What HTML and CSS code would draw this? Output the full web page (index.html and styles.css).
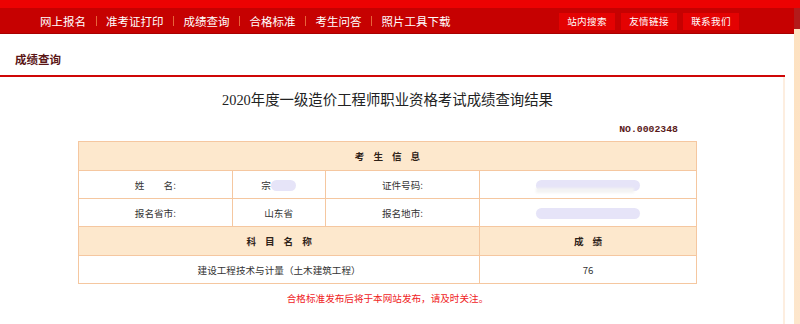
FILE: index.html
```html
<!DOCTYPE html>
<html lang="zh-CN">
<head>
<meta charset="utf-8">
<title>成绩查询</title>
<link rel="stylesheet" href="styles.css">
</head>
<body>
<div class="topbar"></div>
<div class="frame">
  <div class="main">
    <nav class="nav">
      <ul class="menu">
        <li>网上报名</li><li class="sep"></li>
        <li>准考证打印</li><li class="sep"></li>
        <li>成绩查询</li><li class="sep"></li>
        <li>合格标准</li><li class="sep"></li>
        <li>考生问答</li><li class="sep"></li>
        <li>照片工具下载</li>
      </ul>
      <div class="btns">
        <a class="btn">站内搜索</a>
        <a class="btn">友情链接</a>
        <a class="btn">联系我们</a>
      </div>
    </nav>
    <div class="panel">
      <div class="crumb">成绩查询</div>
      <div class="body">
        <div class="inner">
          <h1 class="title">2020年度一级造价工程师职业资格考试成绩查询结果</h1>
          <div class="no">NO.0002348</div>
          <table class="score">
            <tr class="head"><td colspan="4"><span class="spaced">考生信息</span></td></tr>
            <tr>
              <td class="c1">姓　　名:</td>
              <td class="c2">宗<span class="blur blur-s"></span></td>
              <td class="c3">证件号码:</td>
              <td class="c4"><span class="blur blur-l"></span><span class="ghost"></span></td>
            </tr>
            <tr>
              <td>报名省市:</td>
              <td>山东省</td>
              <td>报名地市:</td>
              <td><span class="blur blur-l"></span></td>
            </tr>
            <tr class="head">
              <td colspan="3"><span class="spaced">科目名称</span></td>
              <td><span class="spaced">成绩</span></td>
            </tr>
            <tr>
              <td colspan="3">建设工程技术与计量（土木建筑工程）</td>
              <td>76</td>
            </tr>
          </table>
          <p class="notice">合格标准发布后将于本网站发布，请及时关注。</p>
        </div>
      </div>
    </div>
  </div>
  <div class="side"></div>
</div>
</body>
</html>
```
FILE: styles.css
```css
* { box-sizing: border-box; }
html, body { margin: 0; padding: 0; }
body {
  width: 800px;
  height: 324px;
  overflow: hidden;
  background: #fff;
  font-family: "Noto Sans CJK SC", "Noto Sans", sans-serif;
  color: #333;
}
.topbar {
  height: 8px;
  background: #ec0202;
}
.frame {
  display: flex;
  height: 316px;
}
.main {
  width: 794px;
  display: flex;
  flex-direction: column;
}
.side {
  width: 6px;
  background: linear-gradient(#b31a1a 0, #b31a1a 21px, #fde1c0 21px, #fde6cc 100%);
}
.nav {
  height: 26px;
  background: #c60101;
  border-bottom: 1px solid #a80000;
  display: flex;
  align-items: center;
  padding-left: 40px;
  padding-right: 55px;
}
.menu {
  list-style: none;
  margin: 0;
  padding: 0;
  display: flex;
  align-items: center;
  color: #fff;
  font-size: 11.5px;
  line-height: 16px;
}
.menu .sep {
  width: 1px;
  height: 10px;
  background: #e8643a;
  margin: 0 9.5px;
}
.btns {
  margin-left: auto;
  display: flex;
  gap: 6px;
  padding-top: 1px;
}
.btn {
  width: 56px;
  height: 17px;
  line-height: 17px;
  text-align: center;
  background: #e40202;
  color: #fff;
  font-size: 9.6px;
  letter-spacing: 0.3px;
}
.panel {
  width: 785px;
  flex: 1;
  display: flex;
  flex-direction: column;
}
.crumb {
  padding: 10px 0 1px 15px;
  line-height: 30px;
  font-size: 11.5px;
  font-weight: bold;
  color: #5a1616;
  border-bottom: 2px solid #cf0606;
}
.body {
  flex: 1;
  border-right: 2px solid #fdeee0;
}
.inner {
  width: 775px;
}
.title {
  margin: 13px 0 0;
  text-align: center;
  font-family: "Liberation Serif", "Noto Sans CJK SC", serif;
  font-size: 14.4px;
  line-height: 20px;
  font-weight: normal;
  color: #222;
}
.no {
  width: 619px;
  margin: 13px auto 4px;
  padding-right: 19px;
  text-align: right;
  font-family: "Liberation Mono", monospace;
  font-weight: bold;
  font-size: 9.8px;
  line-height: 14px;
  color: #5a1a1a;
}
.score {
  width: 619px;
  margin: 0 auto;
  border-collapse: collapse;
  font-size: 9.6px;
  color: #333;
}
.score td {
  border: 1px solid #f5c7a0;
  height: 28px;
  text-align: center;
  vertical-align: middle;
  padding: 0;
}
.score .c1 { width: 154px; }
.score .c2 { width: 93px; }
.score .c3 { width: 155px; }
.score .c4 { width: 217px; }
.score tr.head td {
  background: #fde8cd;
  font-weight: bold;
  color: #2e2218;
  height: 29px;
}
.spaced {
  letter-spacing: 9px;
  margin-right: -9px;
}
.blur {
  display: inline-block;
  vertical-align: middle;
  background: #e6e4f8;
  border-radius: 6px;
  height: 11px;
}
.blur-s {
  width: 25px;
  margin-left: 0;
}
.blur-l {
  width: 104px;
}
.c4 {
  position: relative;
}
.ghost {
  position: absolute;
  left: 56px;
  top: 17px;
  width: 98px;
  height: 5px;
  background: #f3f3f3;
  filter: blur(1px);
}
.notice {
  margin: 7px 0 0;
  text-align: center;
  font-size: 9.6px;
  line-height: 14px;
  color: #f0231e;
}
```
